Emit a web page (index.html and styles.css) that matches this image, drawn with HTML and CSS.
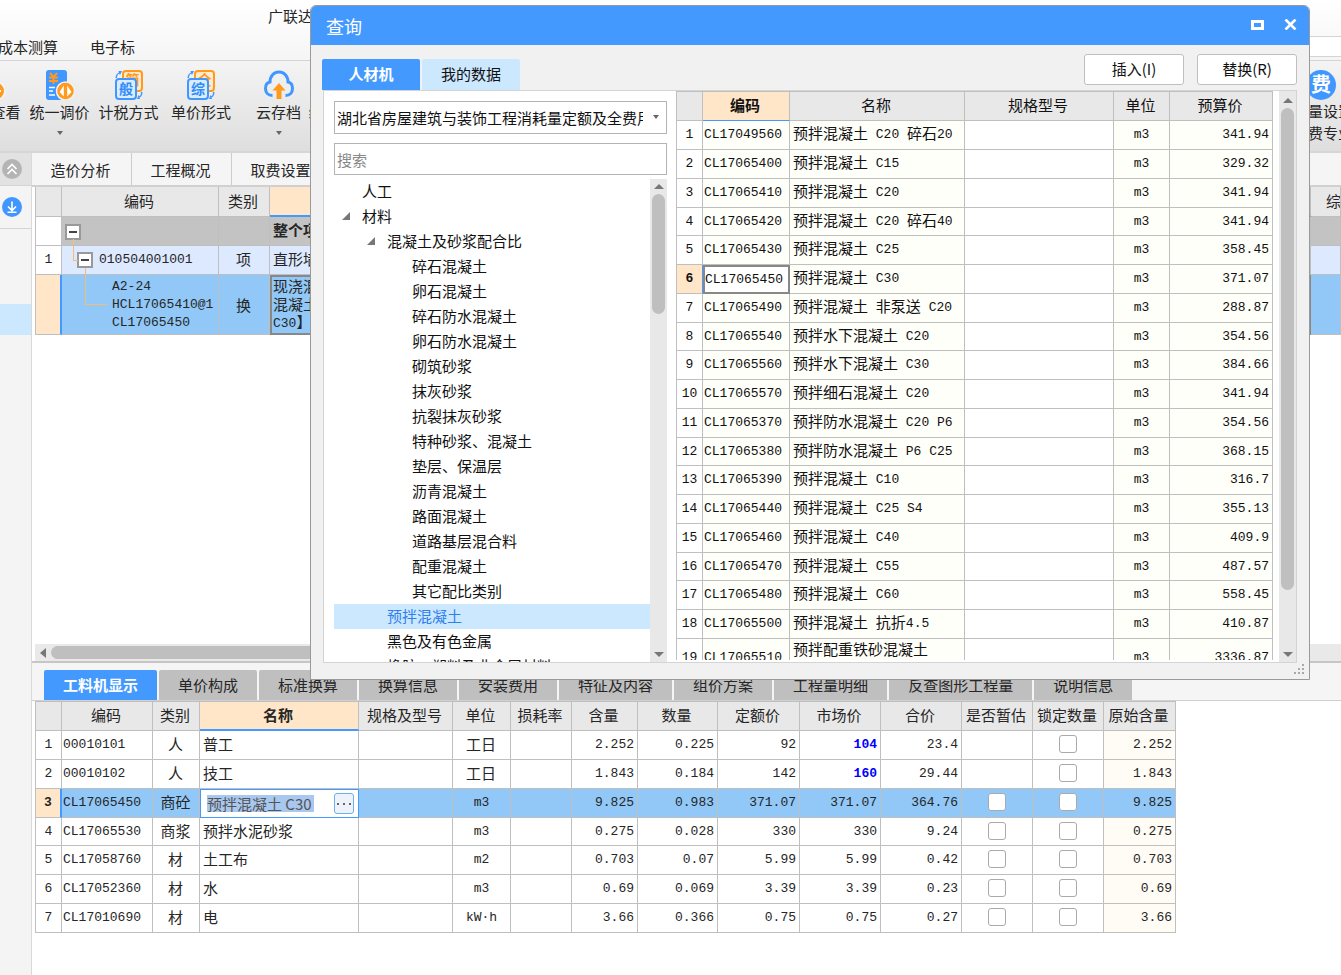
FILE: index.html
```html
<!DOCTYPE html>
<html lang="zh-CN">
<head>
<meta charset="utf-8">
<title>广联达</title>
<link rel="stylesheet" href="styles.css">
</head>
<body>
<div class="app">
  <header class="top">
    <div class="app-title">广联达</div>
    <nav class="menu"><a href="#">成本测算</a><a href="#">电子标</a></nav>
    <div class="top-blank"></div>
  </header>

  <div class="ribbon">
    <button class="tool">
      <svg width="30" height="30" viewBox="0 0 30 30"><rect x="0" y="0" width="21" height="30" rx="3" fill="#3f97ff"/><circle cx="20" cy="21" r="9" fill="#ff9a1f" stroke="#f2f2f2" stroke-width="2"/><path d="M15 21h10" stroke="#fff" stroke-width="2"/></svg>
      <span>对比查看</span>
    </button>
    <button class="tool">
      <svg width="30" height="30" viewBox="0 0 30 30"><rect x="1" y="0" width="21" height="30" rx="3" fill="#3f97ff"/><path d="M5 3l3.500 4 3.500-4M8.500 7v7M4 7.500h9M4 11h9" fill="none" stroke="#ff9a1f" stroke-width="2"/><path d="M4 17.500h6M4 21h4M4 25h6" stroke="#fff" stroke-width="1.500"/><circle cx="20.500" cy="21" r="9" fill="#ff9a1f" stroke="#f0f0f0" stroke-width="1.500"/><path d="M18.800 15.500v11l-4.300-4.500zM22.200 15.500v11l4.300-4.500z" fill="#fff"/></svg>
      <span>统一调价</span>
      <i class="caret"></i>
    </button>
    <button class="tool">
      <svg width="30" height="30" viewBox="0 0 30 30"><rect x="9" y="1" width="19" height="20" rx="3" fill="#ffeccf" stroke="#ff9a1f" stroke-width="2"/><text x="18.500" y="15" class="glyph orange">简</text><rect x="2" y="9" width="20" height="20" rx="3" fill="#dcecff" stroke="#3f97ff" stroke-width="2"/><text x="12" y="24" class="glyph blue">般</text><path d="M1.500 8C1.500 5 3 3.500 5 2.500L4.500 1H8L6 5 5 3.500C3.500 4.500 3 6 3 8zM28.500 22c0 3-1 4.500-3 5.500l.5 1.500h-3l1.500-4 1 1.200c1.200-1 1.500-2.200 1.500-4.200z" fill="#3f97ff"/></svg>
      <span>计税方式</span>
    </button>
    <button class="tool wide">
      <svg width="30" height="30" viewBox="0 0 30 30"><rect x="9" y="1" width="19" height="20" rx="3" fill="#ffeccf" stroke="#ff9a1f" stroke-width="2"/><text x="18.500" y="15" class="glyph orange">全</text><rect x="2" y="9" width="20" height="20" rx="3" fill="#dcecff" stroke="#3f97ff" stroke-width="2"/><text x="12" y="24" class="glyph blue">综</text><path d="M1.500 8C1.500 5 3 3.500 5 2.500L4.500 1H8L6 5 5 3.500C3.500 4.500 3 6 3 8zM28.500 22c0 3-1 4.500-3 5.500l.5 1.500h-3l1.500-4 1 1.200c1.200-1 1.500-2.200 1.500-4.200z" fill="#3f97ff"/></svg>
      <span>单价形式</span>
    </button>
    <button class="tool cloud">
      <svg width="30" height="30" viewBox="0 0 30 30"><path d="M8.500 25.500C4 25.500 1.500 22.500 1.500 18.500c0-3.500 2-6 4.500-6.500C6 6 10 2 15 2s9 4 9 10c2.500.5 4.500 3 4.500 6.500 0 4-2.500 7-7 7" fill="none" stroke="#3f97ff" stroke-width="3"/><path d="M15 13l6.500 7.500h-4V29h-5v-8.500h-4z" fill="#ff9a1f"/></svg>
      <span>云存档</span>
      <i class="caret"></i>
    </button>
    <button class="tool">
      <svg width="30" height="30" viewBox="0 0 30 30"><rect x="4" y="0" width="22" height="30" rx="3" fill="#3f97ff"/></svg>
      <span>组价方案</span>
    </button>
    <button class="tool last">
      <svg width="30" height="30" viewBox="0 0 30 30"><circle cx="15" cy="15" r="15" fill="#3f97ff"/><text x="15" y="22" class="glyph white">费</text></svg>
      <span>量设置<br>费专业</span>
    </button>
  </div>

  <div class="work">
    <aside class="side">
      <button class="side-top" aria-label="收起"><svg width="20" height="20" viewBox="0 0 20 20"><circle cx="10" cy="10" r="10" fill="#b4b4b4"/><path d="M5.500 10l4.500-4.500 4.500 4.500M5.500 15l4.500-4.500 4.500 4.500" fill="none" stroke="#fff" stroke-width="1.700"/></svg></button>
      <button class="side-next" aria-label="下载"><svg width="20" height="20" viewBox="0 0 20 20"><circle cx="10" cy="10" r="10" fill="#3f97ff"/><path d="M10 4.500v8.500M6 9.500l4 4 4-4M5.500 15.300h9" fill="none" stroke="#fff" stroke-width="1.600"/></svg></button>
      <div class="side-active"></div>
    </aside>

    <main class="main">
      <nav class="pages"><a href="#">造价分析</a><a href="#">工程概况</a><a href="#">取费设置</a></nav>

      <section class="upper">
        <table class="grid bill">
          <colgroup><col class="w27"><col class="w157"><col class="w51"><col><col class="w30"></colgroup>
          <thead><tr><th></th><th>编码</th><th>类别</th><th class="cur"></th><th class="cut">综合单价</th></tr></thead>
          <tbody>
            <tr class="total"><td class="no"></td><td class="lv0"><button class="fold" aria-label="折叠"></button></td><td></td><td class="bold">整个项目</td><td></td></tr>
            <tr class="item"><td class="no">1</td><td class="lv1"><button class="fold" aria-label="折叠"></button><span class="m">010504001001</span></td><td class="c">项</td><td>直形墙</td><td></td></tr>
            <tr class="sub"><td class="no on"></td><td class="lv2 m">A2-24<br>HCL17065410@1<br>CL17065450</td><td class="c">换</td><td class="edit">现浇混凝土<br>混凝土<br><span class="m">C30</span>】</td><td></td></tr>
          </tbody>
        </table>
        <div class="hbar"><i class="arrow-left"></i><div class="hthumb"></div></div>
      </section>

      <section class="lower">
        <nav class="tabs">
          <button class="on">工料机显示</button><button>单价构成</button><button>标准换算</button><button>换算信息</button><button>安装费用</button><button>特征及内容</button><button>组价方案</button><button>工程量明细</button><button>反查图形工程量</button><button>说明信息</button>
        </nav>
        <div class="lower-body">
        <table class="grid res">
          <colgroup><col class="w27"><col class="w91"><col class="w47"><col class="w159"><col class="w94"><col class="w58"><col class="w61"><col class="w66"><col class="w80"><col class="w82"><col class="w81"><col class="w81"><col class="w71"><col class="w71"><col class="w72"></colgroup>
          <thead><tr><th></th><th>编码</th><th>类别</th><th class="cur">名称</th><th>规格及型号</th><th>单位</th><th>损耗率</th><th>含量</th><th>数量</th><th>定额价</th><th>市场价</th><th>合价</th><th>是否暂估</th><th>锁定数量</th><th>原始含量</th></tr></thead>
          <tbody>
            <tr><td class="no">1</td><td class="m">00010101</td><td class="c">人</td><td>普工</td><td></td><td class="c">工日</td><td></td><td class="n">2.252</td><td class="n">0.225</td><td class="n">92</td><td class="n hot">104</td><td class="n">23.4</td><td></td><td class="c"><input type="checkbox" aria-label="锁定数量"></td><td class="n old">2.252</td></tr>
            <tr><td class="no">2</td><td class="m">00010102</td><td class="c">人</td><td>技工</td><td></td><td class="c">工日</td><td></td><td class="n">1.843</td><td class="n">0.184</td><td class="n">142</td><td class="n hot">160</td><td class="n">29.44</td><td></td><td class="c"><input type="checkbox" aria-label="锁定数量"></td><td class="n old">1.843</td></tr>
            <tr class="sel"><td class="no on">3</td><td class="m">CL17065450</td><td class="c">商砼</td><td class="editing"><div class="editor"><input type="text" value="预拌混凝土 C30" aria-label="名称"><button aria-label="更多"><svg width="14" height="2" viewBox="0 0 14 2"><path d="M0 0h2v2H0zM6 0h2v2H6zM12 0h2v2h-2z" fill="#666"/></svg></button></div></td><td></td><td class="c m">m3</td><td></td><td class="n">9.825</td><td class="n">0.983</td><td class="n">371.07</td><td class="n">371.07</td><td class="n">364.76</td><td class="c"><input type="checkbox" aria-label="是否暂估"></td><td class="c"><input type="checkbox" aria-label="锁定数量"></td><td class="n">9.825</td></tr>
            <tr><td class="no">4</td><td class="m">CL17065530</td><td class="c">商浆</td><td>预拌水泥砂浆</td><td></td><td class="c m">m3</td><td></td><td class="n">0.275</td><td class="n">0.028</td><td class="n">330</td><td class="n">330</td><td class="n">9.24</td><td class="c"><input type="checkbox" aria-label="是否暂估"></td><td class="c"><input type="checkbox" aria-label="锁定数量"></td><td class="n old">0.275</td></tr>
            <tr><td class="no">5</td><td class="m">CL17058760</td><td class="c">材</td><td>土工布</td><td></td><td class="c m">m2</td><td></td><td class="n">0.703</td><td class="n">0.07</td><td class="n">5.99</td><td class="n">5.99</td><td class="n">0.42</td><td class="c"><input type="checkbox" aria-label="是否暂估"></td><td class="c"><input type="checkbox" aria-label="锁定数量"></td><td class="n old">0.703</td></tr>
            <tr><td class="no">6</td><td class="m">CL17052360</td><td class="c">材</td><td>水</td><td></td><td class="c m">m3</td><td></td><td class="n">0.69</td><td class="n">0.069</td><td class="n">3.39</td><td class="n">3.39</td><td class="n">0.23</td><td class="c"><input type="checkbox" aria-label="是否暂估"></td><td class="c"><input type="checkbox" aria-label="锁定数量"></td><td class="n old">0.69</td></tr>
            <tr><td class="no">7</td><td class="m">CL17010690</td><td class="c">材</td><td>电</td><td></td><td class="c m">kW·h</td><td></td><td class="n">3.66</td><td class="n">0.366</td><td class="n">0.75</td><td class="n">0.75</td><td class="n">0.27</td><td class="c"><input type="checkbox" aria-label="是否暂估"></td><td class="c"><input type="checkbox" aria-label="锁定数量"></td><td class="n old">3.66</td></tr>
          </tbody>
        </table>
        </div>
      </section>
    </main>
  </div>

  <div class="dialog" role="dialog" aria-label="查询">
    <div class="titlebar">
      <h1>查询</h1>
      <button aria-label="最大化"><svg width="13" height="10" viewBox="0 0 13 10"><rect x="1.500" y="1.500" width="10" height="7" fill="none" stroke="#fff" stroke-width="3"/></svg></button>
      <button aria-label="关闭"><svg width="13" height="11" viewBox="0 0 13 11"><path d="M1.500 .5l10 10M11.500 .5l-10 10" stroke="#fff" stroke-width="2.600"/></svg></button>
    </div>
    <div class="dlg-head">
      <button class="dtab on">人材机</button><button class="dtab">我的数据</button>
      <div class="actions"><button>插入(I)</button><button>替换(R)</button></div>
    </div>
    <div class="dlg-body">
      <div class="left">
        <div class="combo">
          <select aria-label="定额库"><option>湖北省房屋建筑与装饰工程消耗量定额及全费用基价表</option></select>
          <i class="caret"></i>
        </div>
        <input class="search" type="text" placeholder="搜索" aria-label="搜索">
        <div class="tree-wrap">
          <ul class="tree">
            <li class="d0">人工</li>
            <li class="d0"><i class="tri"></i>材料</li>
            <li class="d1"><i class="tri"></i>混凝土及砂浆配合比</li>
            <li class="d2">碎石混凝土</li>
            <li class="d2">卵石混凝土</li>
            <li class="d2">碎石防水混凝土</li>
            <li class="d2">卵石防水混凝土</li>
            <li class="d2">砌筑砂浆</li>
            <li class="d2">抹灰砂浆</li>
            <li class="d2">抗裂抹灰砂浆</li>
            <li class="d2">特种砂浆、混凝土</li>
            <li class="d2">垫层、保温层</li>
            <li class="d2">沥青混凝土</li>
            <li class="d2">路面混凝土</li>
            <li class="d2">道路基层混合料</li>
            <li class="d2">配重混凝土</li>
            <li class="d2">其它配比类别</li>
            <li class="d1 on">预拌混凝土</li>
            <li class="d1">黑色及有色金属</li>
            <li class="d1">橡胶、塑料及非金属材料</li>
          </ul>
          <div class="vbar"><i class="up"></i><div class="thumb tree-thumb"></div><i class="down"></i></div>
        </div>
      </div>
      <div class="right">
        <div class="scroll">
        <table class="grid mat">
          <colgroup><col class="w27"><col class="w87"><col class="w175"><col><col class="w56"><col class="w103"></colgroup>
          <thead><tr><th></th><th class="cur thin">编码</th><th>名称</th><th>规格型号</th><th>单位</th><th>预算价</th></tr></thead>
          <tbody>
            <tr><td class="no">1</td><td class="m">CL17049560</td><td>预拌混凝土<span class="m"> C20 </span>碎石<span class="m">20</span></td><td class="w"></td><td class="c m">m3</td><td class="n">341.94</td></tr>
            <tr><td class="no">2</td><td class="m">CL17065400</td><td>预拌混凝土<span class="m"> C15</span></td><td class="w"></td><td class="c m">m3</td><td class="n">329.32</td></tr>
            <tr><td class="no">3</td><td class="m">CL17065410</td><td>预拌混凝土<span class="m"> C20</span></td><td class="w"></td><td class="c m">m3</td><td class="n">341.94</td></tr>
            <tr><td class="no">4</td><td class="m">CL17065420</td><td>预拌混凝土<span class="m"> C20 </span>碎石<span class="m">40</span></td><td class="w"></td><td class="c m">m3</td><td class="n">341.94</td></tr>
            <tr><td class="no">5</td><td class="m">CL17065430</td><td>预拌混凝土<span class="m"> C25</span></td><td class="w"></td><td class="c m">m3</td><td class="n">358.45</td></tr>
            <tr><td class="no on plain">6</td><td class="m focus">CL17065450</td><td>预拌混凝土<span class="m"> C30</span></td><td class="w"></td><td class="c m">m3</td><td class="n">371.07</td></tr>
            <tr><td class="no">7</td><td class="m">CL17065490</td><td>预拌混凝土<span class="m"> </span>非泵送<span class="m"> C20</span></td><td class="w"></td><td class="c m">m3</td><td class="n">288.87</td></tr>
            <tr><td class="no">8</td><td class="m">CL17065540</td><td>预拌水下混凝土<span class="m"> C20</span></td><td class="w"></td><td class="c m">m3</td><td class="n">354.56</td></tr>
            <tr><td class="no">9</td><td class="m">CL17065560</td><td>预拌水下混凝土<span class="m"> C30</span></td><td class="w"></td><td class="c m">m3</td><td class="n">384.66</td></tr>
            <tr><td class="no">10</td><td class="m">CL17065570</td><td>预拌细石混凝土<span class="m"> C20</span></td><td class="w"></td><td class="c m">m3</td><td class="n">341.94</td></tr>
            <tr><td class="no">11</td><td class="m">CL17065370</td><td>预拌防水混凝土<span class="m"> C20 P6</span></td><td class="w"></td><td class="c m">m3</td><td class="n">354.56</td></tr>
            <tr><td class="no">12</td><td class="m">CL17065380</td><td>预拌防水混凝土<span class="m"> P6 C25</span></td><td class="w"></td><td class="c m">m3</td><td class="n">368.15</td></tr>
            <tr><td class="no">13</td><td class="m">CL17065390</td><td>预拌混凝土<span class="m"> C10</span></td><td class="w"></td><td class="c m">m3</td><td class="n">316.7</td></tr>
            <tr><td class="no">14</td><td class="m">CL17065440</td><td>预拌混凝土<span class="m"> C25 S4</span></td><td class="w"></td><td class="c m">m3</td><td class="n">355.13</td></tr>
            <tr><td class="no">15</td><td class="m">CL17065460</td><td>预拌混凝土<span class="m"> C40</span></td><td class="w"></td><td class="c m">m3</td><td class="n">409.9</td></tr>
            <tr><td class="no">16</td><td class="m">CL17065470</td><td>预拌混凝土<span class="m"> C55</span></td><td class="w"></td><td class="c m">m3</td><td class="n">487.57</td></tr>
            <tr><td class="no">17</td><td class="m">CL17065480</td><td>预拌混凝土<span class="m"> C60</span></td><td class="w"></td><td class="c m">m3</td><td class="n">558.45</td></tr>
            <tr><td class="no">18</td><td class="m">CL17065500</td><td>预拌混凝土<span class="m"> </span>抗折<span class="m">4.5</span></td><td class="w"></td><td class="c m">m3</td><td class="n">410.87</td></tr>
            <tr class="tall"><td class="no">19</td><td class="m">CL17065510</td><td class="top-line">预拌配重铁砂混凝土</td><td class="w"></td><td class="c m">m3</td><td class="n">3336.87</td></tr>
          </tbody>
        </table>
        </div>
        <div class="vbar"><i class="up"></i><div class="thumb mat-thumb"></div><i class="down"></i></div>
      </div>
    </div>
    <svg class="grip" width="11" height="11" viewBox="0 0 11 11"><path d="M8 0h2v2H8zM8 4h2v2H8zM4 4h2v2H4zM8 8h2v2H8zM4 8h2v2H4zM0 8h2v2H0z" fill="#aaa"/></svg>
  </div>
</div>
</body>
</html>
```
FILE: styles.css
```css
* { box-sizing: border-box; }

body {
  margin: 0;
  font: 15px/24px "Noto Sans CJK SC", sans-serif;
  color: #262626;
  background: #fff;
}

button, input, select { font: inherit; color: inherit; margin: 0; }
button { padding: 0; border: 0; background: none; }
a { color: inherit; text-decoration: none; }

.app {
  position: relative;
  display: flex;
  flex-direction: column;
  min-height: 100vh;
  overflow: hidden;
}

/* header and ribbon */
.top {
  display: grid;
  grid-template-columns: 1fr 31px;
  grid-template-rows: 36px 24px;
  border-bottom: 1px solid #d4d4d4;
  background: linear-gradient(#fff, #f5f5f5);
}
.app-title { grid-column: 1 / 3; padding: 4px 0 0 268px; }
.menu { display: flex; gap: 32px; margin-left: -2px; line-height: 22px; }
.top-blank { margin-bottom: 3px; border-top: 1px solid #d4d4d4; border-bottom: 1px solid #d4d4d4; background: #fff; }

.ribbon {
  display: flex;
  height: 92px;
  padding-top: 9px;
  border-bottom: 2px solid #d6d6d6;
  background: linear-gradient(#f4f4f4, #dedede);
}
.tool {
  display: flex;
  flex-direction: column;
  align-items: center;
  flex: none;
  width: 69px;
  line-height: 24px;
}
.tool:first-child { margin-left: -44px; }
.tool span { white-space: nowrap; }
.tool.wide { width: 76px; }
.tool.cloud { width: 65px; padding-left: 14px; }
.tool.last { width: 35px; align-items: flex-start; margin-left: auto; text-align: left; line-height: 22px; }
.tool.last span { padding-left: 2px; }
.caret {
  width: 0;
  height: 0;
  border: 3px solid transparent;
  border-top: 4px solid #666;
  border-bottom: 0;
}
.tool .caret { margin-top: 7px; }
.glyph { font: 700 14px "Noto Sans CJK SC", sans-serif; text-anchor: middle; }
.glyph.blue { fill: #2f8cf8; }
.glyph.orange { fill: #ff9a1f; }
.glyph.white { fill: #fff; font-size: 20px; }

/* work area */
.work { display: flex; flex: 1; }
.side { width: 32px; flex: none; border-right: 1px solid #d9d9d9; background: #f4f4f4; }
.side button { display: flex; align-items: center; width: 100%; padding-left: 2px; }
.side-top { height: 33px; background: #e2e2e2; }
.side-next { height: 43px; }
.side .side-top, .side .side-next { border-bottom: 1px solid #d4d4d4; }
.side-active { height: 31px; margin-top: 75px; background: #cce8ff; }
.main { display: flex; flex-direction: column; flex: 1; min-width: 0; }

.pages { display: flex; height: 34px; border-bottom: 2px solid #d0d0d0; background: #f5f5f5; }
.pages a { width: 100px; padding-right: 2px; border-right: 1px solid #ccc; text-align: center; line-height: 33px; }

.upper { display: flex; flex-direction: column; flex: 1; padding-left: 3px; }
.hbar { display: flex; align-items: center; gap: 5px; height: 17px; margin-top: auto; padding-left: 5px; background: #e9e9e9; }
.arrow-left { border: 5px solid transparent; border-right: 6px solid #777; border-left: 0; }
.hthumb { flex: 1; height: 13px; margin-right: 60px; border-radius: 7px; background: #bfbfbf; }

/* tables */
.grid { border-collapse: separate; border-spacing: 0; table-layout: fixed; line-height: 20px; }
.grid th, .grid td {
  height: 29px;
  padding: 0 3px 2px;
  border-right: 1px solid #bfbfbf;
  border-bottom: 1px solid #bfbfbf;
  overflow: hidden;
  white-space: nowrap;
  text-align: left;
  font-weight: 400;
}
.grid th { padding: 0 2px 2px 0; background: #e8e8e8; text-align: center; }
.grid th:first-child, .grid td:first-child { border-left: 1px solid #bfbfbf; }
.grid tr:nth-child(4n) td { height: 28px; }
.grid .cur { background: #ffe6c8; border-bottom: 2px solid #4499ff; font-weight: 700; }
.grid .thin { border-bottom-width: 1px; }
.grid .c { text-align: center; padding: 0 1px 2px 0; }
.grid .no { padding: 0; background: #fff; text-align: center; }
.m, .grid .n, .grid .no { font-family: "Liberation Mono", "Noto Sans CJK SC", monospace; font-size: 13px; }
span.m { white-space: pre; vertical-align: 1px; }
.grid td.m { padding: 0 1px; }
.grid .n { padding: 0 3px; text-align: right; }
.grid .no.on { background: #ffe6c8; border-right: 2px solid #4499ff; font-weight: 700; }

.w27 { width: 27px; } .w30 { width: 30px; } .w47 { width: 47px; } .w51 { width: 51px; }
.w56 { width: 56px; } .w58 { width: 58px; } .w61 { width: 61px; } .w66 { width: 66px; }
.w71 { width: 71px; } .w72 { width: 72px; } .w80 { width: 80px; } .w81 { width: 81px; }
.w82 { width: 82px; } .w87 { width: 87px; } .w91 { width: 91px; } .w94 { width: 94px; }
.w103 { width: 103px; } .w157 { width: 157px; } .w159 { width: 159px; } .w175 { width: 175px; }

.bill { width: 100%; }
.bill th { height: 30px; }
.bill .cut { padding-left: 15px; text-align: left; }
.bill .total td:not(.no) { background: #c3c3c3; }
.bill .bold { font-weight: 700; }
.bill .item td:not(.no) { background: #dde9ff; }
.bill .sub td { height: 58px; padding-bottom: 0; line-height: 18px; }
.bill .sub td:not(.no) { background: #91c8f7; }
.bill .sub .edit { background: #fff; border: 2px solid #888; padding: 0 1px; }
.fold {
  width: 16px;
  height: 16px;
  padding: 0 2px;
  border: 2px solid #999;
  background: #fff;
  vertical-align: middle;
}
.fold::before { content: ""; display: block; height: 2px; background: #444; }
.grid .lv0, .grid .lv1, .grid .lv2 { position: relative; }
.grid .lv1 { padding-left: 15px; }
.lv1 .m { padding-left: 6px; }
.grid td.lv2 { padding-left: 50px; }
.lv0::after, .lv1::before, .lv1::after, .lv2::before {
  content: "";
  position: absolute;
  border: 1px solid #f5bd70;
  border-width: 0 0 1px 1px;
}
.lv0::after { left: 11px; top: 22px; height: 7px; }
.lv1::before { left: 11px; top: 0; width: 4px; height: 14px; }
.lv1::after { left: 23px; top: 22px; height: 7px; }
.lv2::before { left: 23px; top: 0; width: 21px; height: 29px; }

/* lower panel */
.lower { border-top: 2px solid #c6c6c6; background: #f5f5f5; }
.tabs { display: flex; gap: 2px; padding: 7px 0 0 12px; }
.tabs button { height: 30px; padding: 0 19px; border-radius: 2px 2px 0 0; background: #bfbfbf; }
.tabs button.on, .dtab.on { background: #4499ff; color: #fff; font-weight: 700; }
.lower-body { padding: 0 0 42px 3px; border-top: 1px solid #d0d0d0; background: #fff; }
.res { width: 1141px; border-top: 1px solid #bfbfbf; }
.res .sel td:not(.no):not(.editing) { background: #91c8f7; }
.res .old { background: #fffbf5; }
.res .hot { color: #00f; font-weight: 700; }
.res input[type="checkbox"] {
  appearance: none;
  display: block;
  width: 18px;
  height: 18px;
  margin: 0 auto;
  border: 1px solid #aaa;
  border-radius: 3px;
  background: #fff;
}
.grid .editing { padding: 0; border: 1px solid #4499ff; background: #fff; }
.editor { display: flex; align-items: center; justify-content: space-between; padding: 0 4px 0 6px; }
.editor input { width: 107px; height: 17px; padding: 0; border: 0; background: #a9c8ef; color: #555; line-height: 17px; }
.editor button { display: flex; align-items: center; justify-content: center; width: 20px; height: 21px; border: 1px solid #6fb0ec; border-radius: 3px; background: #eef2fa; }

/* dialog */
.dialog {
  position: absolute;
  top: 5px;
  left: 310px;
  right: 31px;
  height: 675px;
  display: flex;
  flex-direction: column;
  border: 1px solid #9a9a9a;
  border-radius: 6px 6px 0 0;
  background: #f1f1f1;
  overflow: hidden;
  color: #111;
}
.titlebar { display: flex; align-items: center; gap: 20px; height: 39px; padding: 0 12px 2px 15px; background: #4499ff; color: #fff; }
.titlebar h1 { margin: 3px auto 0 0; font-size: 18px; font-weight: 400; }
.titlebar button { display: flex; }
.dlg-head { display: flex; gap: 2px; height: 45px; padding: 14px 12px 0 11px; }
.dtab { width: 98px; padding-bottom: 2px; border-radius: 2px 2px 0 0; background: #cce8ff; }
.actions { display: flex; gap: 13px; height: 31px; margin: -5px 0 0 auto; }
.actions button { width: 100px; padding-bottom: 1px; border: 1px solid #bfbfbf; border-radius: 3px; background: #fff; }
.dlg-body { display: flex; flex: 1; min-height: 0; margin: 0 12px 16px; border: 1px solid #d4d4d4; background: #fff; }
.left { display: flex; flex-direction: column; width: 352px; padding: 10px 9px 0 10px; }
.combo { position: relative; height: 33px; }
.combo select, .search { width: 100%; border: 1px solid #b4b4b4; border-radius: 0; background: #fff; outline: 0; }
.combo select { appearance: none; height: 33px; padding: 0 23px 0 2px; }
.combo .caret { position: absolute; right: 8px; top: 14px; }
.search { height: 32px; flex: none; margin-top: 9px; padding: 0 2px; }
.search::placeholder { color: #888; }
.tree-wrap { display: flex; flex: 1; min-height: 0; margin-top: 4px; }
.tree { flex: 1; margin: 0; padding: 0; list-style: none; overflow: hidden; }
.tree li { display: flex; align-items: center; height: 25px; padding-bottom: 1px; }
.d0 { padding-left: 28px; }
.d1 { padding-left: 53px; }
.d2 { padding-left: 78px; }
.tree .on { background: #cce8ff; color: #2f80ed; }
.tri { margin: 0 12px 0 -20px; border-left: 8px solid transparent; border-bottom: 8px solid #777; }
.vbar { display: flex; flex-direction: column; align-items: center; width: 17px; flex: none; padding: 5px 0; background: #e8e8e8; }
.up, .down { border: 5px solid transparent; }
.up { border-top: 0; border-bottom: 5px solid #777; }
.down { margin-top: auto; border-bottom: 0; border-top: 5px solid #777; }
.thumb { width: 13px; margin-top: 5px; border-radius: 7px; background: #bfbfbf; }
.tree-thumb { height: 120px; }
.mat-thumb { height: 482px; }
.right { display: flex; flex: 1; min-width: 0; }
.right .vbar { padding-top: 7px; }
.scroll { flex: 1; margin: 0 6px 2px 0; overflow: hidden; }
.mat { width: 100%; border-top: 1px solid #bfbfbf; }
.mat td { background: #fffffa; }
.mat .w { background: #fff; }
.mat .no.plain { border-right: 1px solid #4499ff; }
.grid td.focus { border: 2px solid #888; background: #fff; padding: 0; }
.grid .tall td { height: 39px; }
.grid .tall .top-line { vertical-align: top; }
.grip { position: absolute; right: 4px; bottom: 4px; }
```
